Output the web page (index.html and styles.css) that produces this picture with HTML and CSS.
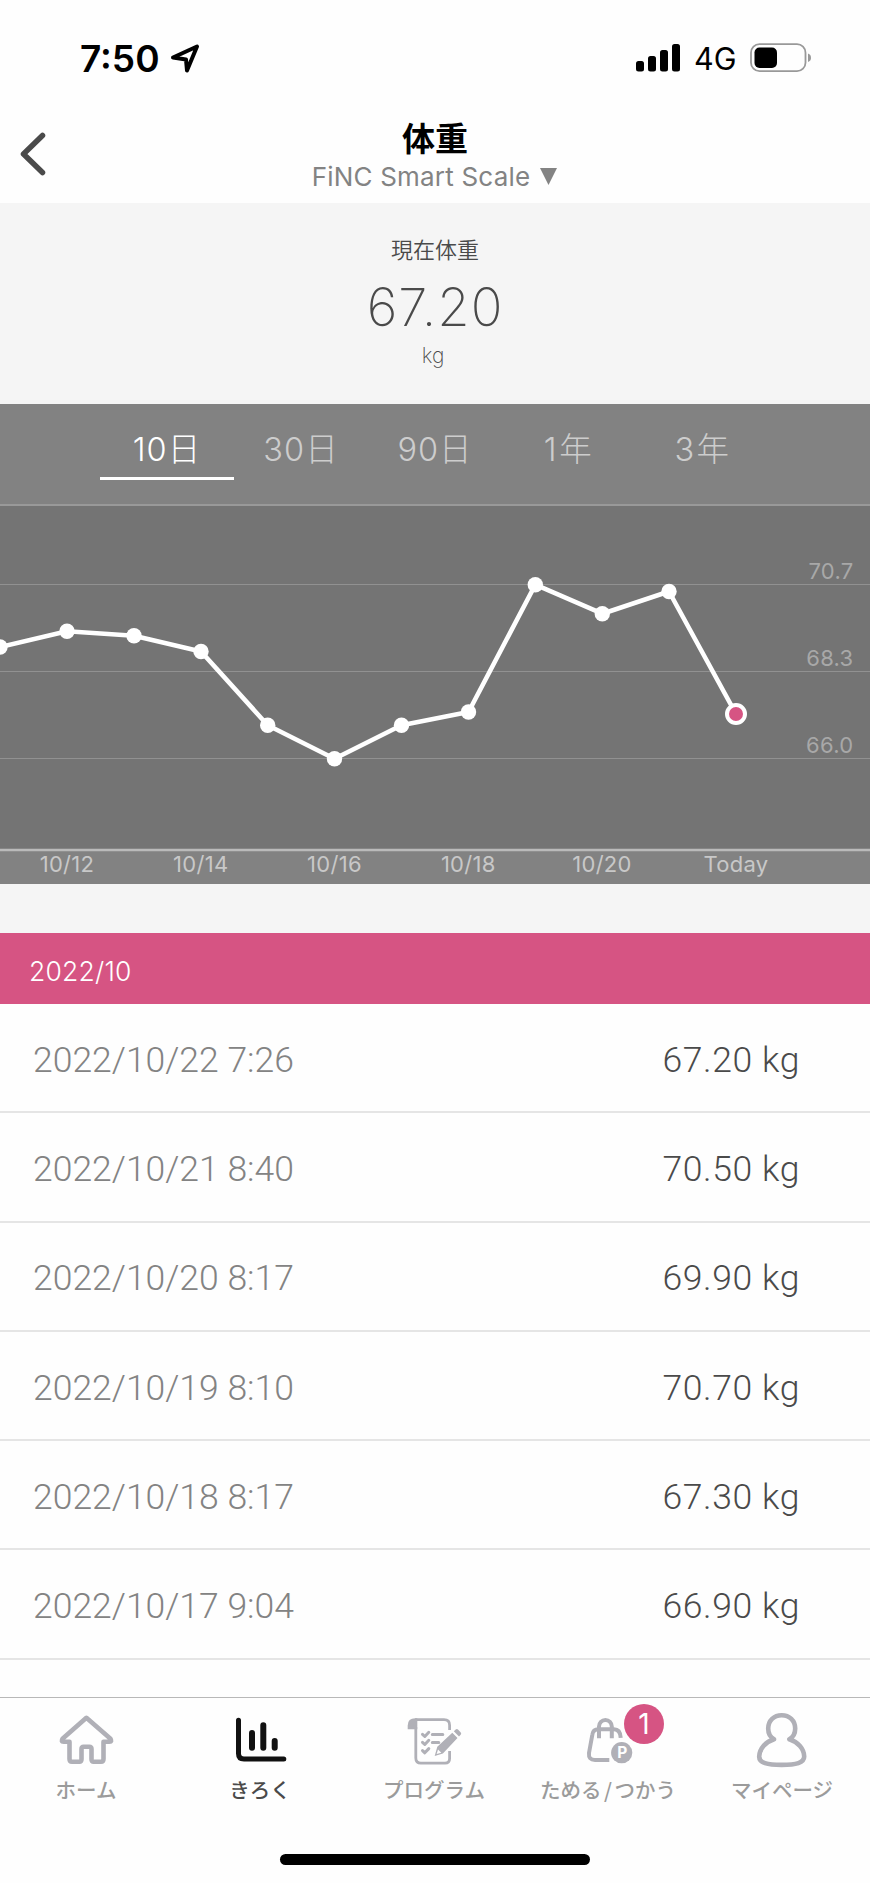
FILE: index.html
```html
<!DOCTYPE html>
<html lang="ja">
<head>
  <meta charset="UTF-8" />
  <title>体重</title>
  <meta name="viewport" content="width=device-width, initial-scale=1.0" />
  <link rel="stylesheet" href="styles.css">
</head>
<body>
  <!-- Status bar -->
  <div class="status-bar">
    <div class="status-left">
      <span class="time">7:50</span>
      <svg class="location" width="32" height="32" viewBox="0 0 32 32">
        <path d="M4 15.5 28 4.5 18 28.5 17 17.5Z" />
      </svg>
    </div>
    <div class="status-right">
      <svg width="45" height="28" viewBox="0 0 45 28">
        <rect x="0" y="17" width="8" height="10.5" rx="2.5" />
        <rect x="12" y="12" width="8" height="15.5" rx="2.5" />
        <rect x="24" y="6" width="8" height="21.5" rx="2.5" />
        <rect x="36" y="0" width="8" height="27.5" rx="2.5" />
      </svg>
      <span class="network">4G</span>
      <svg width="62" height="30" viewBox="0 0 62 30">
        <rect x="1" y="1.2" width="54.5" height="27" rx="8.5" fill="none" stroke="#999" stroke-width="1.8" />
        <rect x="4.5" y="4.5" width="22.5" height="20.5" rx="5" />
        <path d="M58 10.5q3 1 3 4.2t-3 4.2z" fill="#999" />
      </svg>
    </div>
  </div>

  <header>
    <svg class="back" width="30" height="46" viewBox="0 0 30 46">
      <path d="M24.5 4.5 5.5 23 24.5 41.5" />
    </svg>
    <h1>体重</h1>
    <div class="device">FiNC Smart Scale
      <svg width="17" height="17" viewBox="0 0 17 17"><path d="M0 0h17L8.5 17z" /></svg>
    </div>
  </header>

  <section class="summary">
    <div class="summary-label">現在体重</div>
    <div class="summary-value">67.20</div>
    <div class="summary-unit">kg</div>
  </section>

  <section class="chart">
    <nav class="periods">
      <a class="active">10日</a>
      <a>30日</a>
      <a>90日</a>
      <a class="year">1年</a>
      <a class="year">3年</a>
    </nav>
    <svg class="plot" width="870" height="380" viewBox="0 0 870 380">
      <rect class="plot-bg" x="0" y="0" width="870" height="346" />
      <path class="top-line" d="M0 1H870" />
      <path class="grid" d="M0 80.5H870M0 167.5H870M0 254.5H870" />
      <path class="axis" d="M0 346H870" />

      <g class="y-labels">
        <text x="853.5" y="75.4">70.7</text>
        <text x="853.5" y="162.4">68.3</text>
        <text x="853.5" y="249.2">66.0</text>
      </g>

      <polyline points="0,143 67,127.3 134,131.8 201,147.5 267.7,221.2 334.5,254.7 401.5,221.2 468.5,208 535.3,80.7 602.3,109.7 669,87.5 736,210" />
      <g class="dots">
        <circle cx="0" cy="143" r="7.7" />
        <circle cx="67" cy="127.3" r="7.7" />
        <circle cx="134" cy="131.8" r="7.7" />
        <circle cx="201" cy="147.5" r="7.7" />
        <circle cx="267.7" cy="221.2" r="7.7" />
        <circle cx="334.5" cy="254.7" r="7.7" />
        <circle cx="401.5" cy="221.2" r="7.7" />
        <circle cx="468.5" cy="208" r="7.7" />
        <circle cx="535.3" cy="80.7" r="7.7" />
        <circle cx="602.3" cy="109.7" r="7.7" />
        <circle cx="669" cy="87.5" r="7.7" />
      </g>
      <circle class="today" cx="736" cy="210" r="9" />

      <g class="x-labels">
        <text x="67" y="368">10/12</text>
        <text x="200.7" y="368">10/14</text>
        <text x="334.5" y="368">10/16</text>
        <text x="468.3" y="368">10/18</text>
        <text x="602" y="368">10/20</text>
        <text x="736" y="368">Today</text>
      </g>
    </svg>
  </section>

  <main>
    <h2>2022/10</h2>
    <ul class="records">
      <li><span>2022/10/22 7:26</span><b>67.20 kg</b></li>
      <li><span>2022/10/21 8:40</span><b>70.50 kg</b></li>
      <li><span>2022/10/20 8:17</span><b>69.90 kg</b></li>
      <li><span>2022/10/19 8:10</span><b>70.70 kg</b></li>
      <li><span>2022/10/18 8:17</span><b>67.30 kg</b></li>
      <li><span>2022/10/17 9:04</span><b>66.90 kg</b></li>
    </ul>
  </main>

  <!-- Bottom tabs -->
  <footer>
    <nav class="tabs">
      <a>
        <svg class="icon" viewBox="0 0 60 60">
          <path d="M29.4 7.8 5.8 28.4q-2.4 3.4 1 3.4H12.5V49q0 2.7 2.5 2.7H22.3q2.2 0 2.2-2.4V39q0-2.2 2.2-2.2h5.6q2.2 0 2.2 2.2V49.3q0 2.4 2.2 2.4H44q2.5 0 2.5-2.7V31.8H52.2q3.4 0 1-3.4Z" />
        </svg>
        <span>ホーム</span>
      </a>
      <a class="active">
        <svg class="icon" viewBox="0 0 60 60">
          <path d="M7.5 10.3V43.5q0 5.5 5.5 5.5H52.8" />
          <path class="bars" d="M21 23V37.7M32.3 15.2V37.7M43.7 31V37.7" />
        </svg>
        <span>きろく</span>
      </a>
      <a>
        <svg class="icon" viewBox="0 0 60 60">
          <path class="thin" d="M10.8 17V48q0 5.2 5.2 5.2H40q4.6 0 4.6-4.7V41M44.6 20V15.2q0-5.6-5.6-5.6H10" />
          <path class="solid" d="M2.7 19.2V15.5Q2.7 8.3 10.3 8.3h2V19.2z" />
          <path class="checks" d="M17.5 24.3l2.3 2.2 4-4.2M17.5 32.3l2.3 2.2 4-4.2M17.5 40.6l2.3 2.2 4-4.2" />
          <path class="checks" d="M27.3 24.5h10.5M27.3 32.5h6.5" />
          <path class="solid" d="M29.7 46l2.6-9.2L47.3 22.8l5.2 5.3L37.9 43.5zM48.8 21.3l1.9-1.8q1.3-1 2.5.2l2.4 2.5q1.2 1.3.1 2.6l-1.7 1.8z" />
          <path class="hole" d="M31.6 44.1l1.4-4.7 3.3 3.4z" />
        </svg>
        <span>プログラム</span>
      </a>
      <a>
        <svg class="icon" viewBox="0 0 60 60">
          <path class="medium" d="M41.7 27.8q-.5-8.5-6.7-8.5H19.5q-5.5 0-6.2 5.5L10 43q-.7 7 6 7H30.3" />
          <path class="medium" d="M20 28.3V16.5a6.4 6.6 0 0 1 12.8 0V28.3" />
          <circle class="solid" cx="42.7" cy="42.7" r="10.6" />
          <text class="coin" x="43.2" y="48.4">P</text>
        </svg>
        <em class="badge">1</em>
        <span>ためる<i>/</i>つかう</span>
      </a>
      <a>
        <svg class="icon" viewBox="0 0 60 60">
          <path d="M21 29.3C17 27 15.2 23 15.2 18.5 15.2 10.5 21 5.2 28.7 5.2S42.2 10.5 42.2 18.5C42.2 23 40.4 27 36.4 29.3 45 32 51 39 51.2 46.5 51.3 53 43 54.9 28.7 54.9S6.1 53 6.2 46.5C6.4 39 12.4 32 21 29.3Z" />
        </svg>
        <span>マイページ</span>
      </a>
    </nav>
    <div class="home-indicator"></div>
  </footer>
</body>
</html>
```

FILE: styles.css
```css
* {
  box-sizing: border-box;
  margin: 0;
  padding: 0;
}

body {
  width: 870px;
  height: 1883px;
  display: flex;
  flex-direction: column;
  overflow: hidden;
  background: #fefefe;
  font-family: Inter, "Noto Sans CJK JP", sans-serif;
  color: #000;
}

svg {
  display: block;
  flex: none;
}

/* Status bar */
.status-bar {
  height: 116px;
  padding: 0 58px 0 80px;
  display: flex;
  justify-content: space-between;
  align-items: center;
}

.status-left,
.status-right {
  display: flex;
  align-items: center;
}

.time {
  width: 89px;
  font-size: 37px;
  font-weight: 600;
}

.location {
  fill: none;
  stroke: #000;
  stroke-width: 4;
  stroke-linejoin: round;
}

.network {
  width: 56px;
  margin-left: 13px;
  font-size: 30.5px;
  font-weight: 400;
}

/* Header */
header {
  height: 87px;
  position: relative;
  display: flex;
  flex-direction: column;
  align-items: center;
}

.back {
  position: absolute;
  left: 18px;
  top: 15px;
  fill: none;
  stroke: #4a4a4a;
  stroke-width: 5.5;
  stroke-linecap: round;
  stroke-linejoin: round;
}

h1 {
  margin-top: 3px;
  font-size: 33px;
  font-weight: 700;
  line-height: 40px;
}

.device {
  padding-right: 1px;
  display: flex;
  align-items: center;
  gap: 10px;
  color: #838383;
  font-size: 26px;
  line-height: 35px;
  letter-spacing: 0.2px;
}

.device svg {
  fill: #838383;
}

/* Current weight */
.summary {
  height: 201px;
  padding-top: 31px;
  background: #f5f5f5;
  color: #4a4a4a;
  text-align: center;
}

.summary-label {
  font-size: 22px;
  font-weight: 350;
  line-height: 32px;
}

.summary-value {
  margin-top: 9px;
  font-size: 52.5px;
  font-weight: 200;
  line-height: 64px;
  letter-spacing: 1px;
}

.summary-unit {
  margin-top: 5px;
  padding-right: 4px;
  font-size: 21px;
  font-weight: 200;
  line-height: 24px;
}

/* Chart */
.chart {
  height: 480px;
  background: #828282;
}

.periods {
  height: 100px;
  padding-left: 100px;
  display: flex;
}

.periods a {
  width: 134px;
  height: 76px;
  border-bottom: 3px solid transparent;
  color: #cdcdcd;
  font-size: 32.5px;
  font-weight: 300;
  line-height: 91px;
  letter-spacing: 1px;
  text-align: center;
}

.periods .active {
  border-color: #fff;
  color: #fff;
}

.periods .year {
  letter-spacing: 2.5px;
}

.plot-bg {
  fill: #747474;
}

.top-line,
.grid,
.axis {
  stroke: #a6a6a6;
  stroke-width: 1.6;
}

.grid {
  stroke: #919191;
  stroke-width: 1;
}

.axis {
  stroke: #bababa;
  stroke-width: 2.4;
}

.plot text {
  font-size: 22px;
  letter-spacing: 0.3px;
}

.y-labels {
  fill: #a8a8a8;
  text-anchor: end;
}

.x-labels {
  fill: #c8c8c8;
  text-anchor: middle;
}

.plot polyline {
  fill: none;
  stroke: #fff;
  stroke-width: 4.6;
  stroke-linejoin: round;
}

.dots {
  fill: #fff;
}

.today {
  fill: #d65483;
  stroke: #fff;
  stroke-width: 4;
}

/* Records */
main {
  flex: 1;
  min-height: 0;
  padding-top: 49px;
  background: linear-gradient(#f5f5f5 49px, #fefefe 49px);
}

h2 {
  height: 71px;
  padding: 1px 0 0 29px;
  background: #d65483;
  color: #fff;
  font-size: 26.5px;
  font-weight: 300;
  line-height: 74px;
  letter-spacing: 0.2px;
}

.records {
  list-style: none;
}

.records li {
  height: 109.3px;
  padding: 4px 70px 0 33px;
  border-bottom: 2px solid #e5e5e5;
  display: flex;
  justify-content: space-between;
  align-items: center;
  color: #838383;
  font-family: Roboto, "Liberation Sans", sans-serif;
  font-size: 35.5px;
  font-weight: 300;
}

.records b {
  color: #4a4a4a;
  font-weight: 300;
  letter-spacing: 0.6px;
}

/* Bottom tabs */
footer {
  height: 186px;
  border-top: 1px solid #b8b8b8;
}

.tabs {
  height: 156px;
  display: flex;
}

.tabs a {
  flex: 1;
  position: relative;
  padding-top: 12px;
  display: flex;
  flex-direction: column;
  align-items: center;
  color: #9b9b9b;
  font-family: "Noto Sans CJK JP", sans-serif;
  font-size: 20.5px;
  font-weight: 500;
}

.tabs span {
  margin-top: 4px;
  padding-right: 2px;
  line-height: 30px;
  white-space: nowrap;
}

.tabs i {
  margin: 0 2.5px;
  font-style: normal;
}

.tabs a.active {
  color: #4a4a4a;
}

.icon {
  width: 60px;
  height: 60px;
  fill: none;
  stroke: #b0b0b7;
  stroke-width: 4.6;
  stroke-linecap: round;
  stroke-linejoin: round;
}

.active .icon {
  stroke: #111;
  stroke-width: 5;
}

.icon .bars {
  stroke-width: 6;
}

.icon .thin {
  stroke-width: 2.8;
  stroke-linecap: butt;
}

.icon .medium {
  stroke-width: 4;
  stroke-linecap: butt;
}

.icon .checks {
  stroke-width: 3;
}

.icon .solid {
  fill: #b0b0b7;
  stroke: none;
}

.icon .hole {
  fill: #fefefe;
  stroke: none;
}

.coin {
  fill: #fefefe;
  stroke: none;
  font: 700 15.5px Inter, sans-serif;
  text-anchor: middle;
}

.badge {
  position: absolute;
  left: 102px;
  top: 6px;
  width: 40px;
  height: 40px;
  border-radius: 50%;
  background: #d65483;
  color: #fff;
  font: 400 28px/40px Inter, sans-serif;
  text-align: center;
}

.home-indicator {
  width: 310px;
  height: 11px;
  margin: 0 auto;
  border-radius: 6px;
  background: #000;
}
```
